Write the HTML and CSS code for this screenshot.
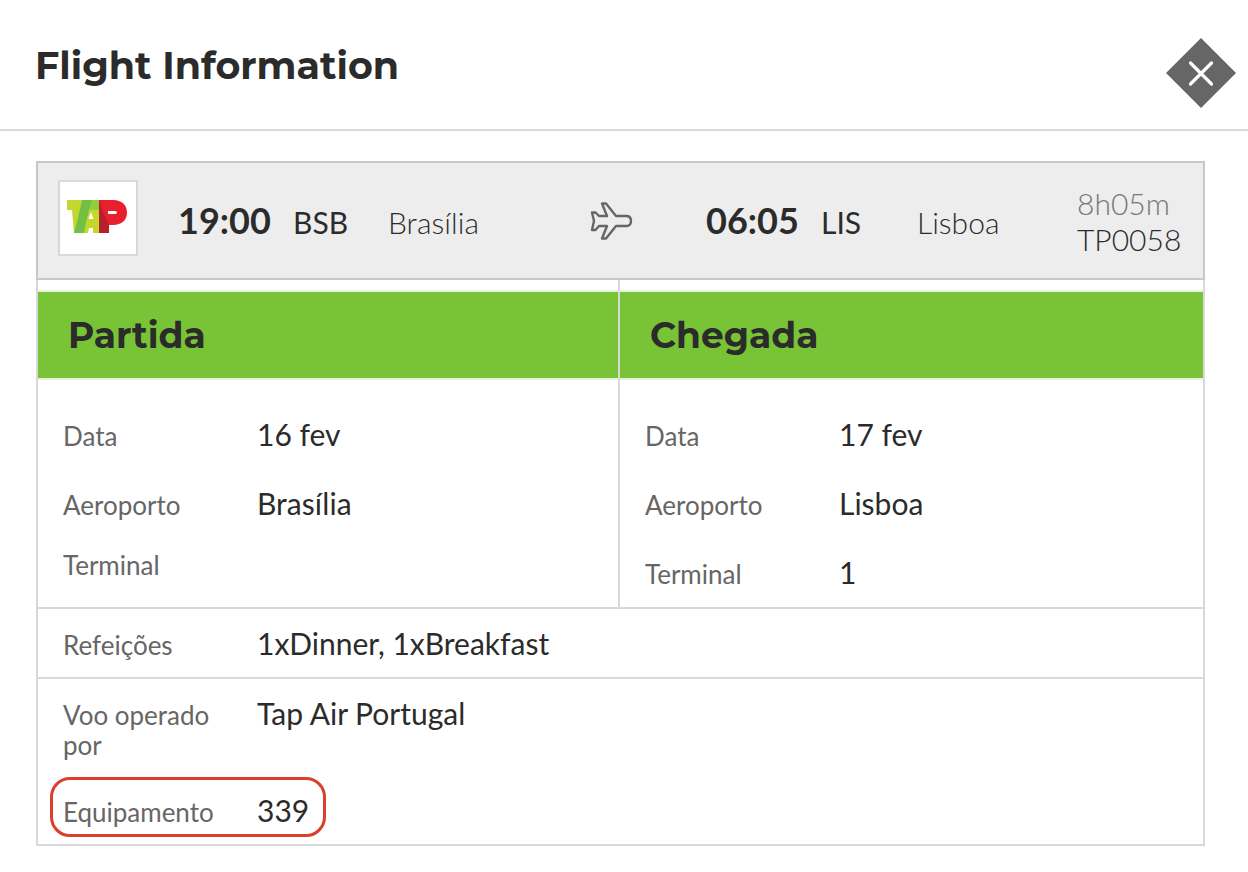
FILE: index.html
```html
<!DOCTYPE html>
<html lang="pt">
<head>
    <meta charset="UTF-8">
    <meta name="viewport" content="width=device-width, initial-scale=1.0">
    <title>Flight Information</title>
    <link rel="stylesheet" href="styles.css">
</head>
<body>
    <header class="modal-header">
        <h1>Flight Information</h1>
        <button type="button" class="close" aria-label="Fechar">
            <svg viewBox="0 0 70 70" width="70" height="70">
                <path d="M35 0L70 35L35 70L0 35Z" fill="#666"/>
                <path d="M24.500 25L45.500 46M45.500 25L24.500 46" stroke="#fff" stroke-width="3.200" stroke-linecap="round"/>
            </svg>
        </button>
    </header>

    <main class="flight">
        <section class="summary">
            <div class="logo">
                <svg viewBox="0 0 62 36" width="62" height="36" role="img" aria-label="TAP">
                    <path d="M0 2H33V35H26V30H22L21 35H7L5 12H0Z" fill="#c3d82e"/>
                    <path d="M15 2H25L19 24L17 35H7L11 20Z" fill="#72c043"/>
                    <path d="M23 10L25 2H33V12H23Z" fill="#8fce3c"/>
                    <path d="M21.500 21L24 14L26.500 21Z" fill="#fff"/>
                    <path d="M32 2H46C55 2 60 7 60 14.500C60 22 55 27 46 27H42V35H32Z" fill="#e8202e"/>
                    <path d="M32 2L36 14L42 27V35H32Z" fill="#b5202b"/>
                    <path d="M41 13H48Q50 13 50 14.500Q50 16 48 16H41Z" fill="#fff"/>
                </svg>
            </div>
            <span class="time">19:00</span>
            <span class="code">BSB</span>
            <span class="city">Brasília</span>
            <svg class="plane" viewBox="0 0 44 38" width="44" height="38">
                <path d="M12 1.500H16L26 14H37Q41 14.500 41 19Q41 23.500 37 24H26L16 36.500H12L17 24H9L5.500 28H2L4 19L2 10.500H5.500L9 14H17Z" fill="none" stroke="#666" stroke-width="2.400" stroke-linejoin="round"/>
            </svg>
            <span class="time">06:05</span>
            <span class="code">LIS</span>
            <span class="city">Lisboa</span>
            <div class="info">
                <div class="duration">8h05m</div>
                <div>TP0058</div>
            </div>
        </section>

        <div class="columns">
            <section class="column">
                <h2>Partida</h2>
                <dl class="details">
                    <div class="row"><dt>Data</dt><dd>16 fev</dd></div>
                    <div class="row"><dt>Aeroporto</dt><dd>Brasília</dd></div>
                    <div class="row"><dt>Terminal</dt><dd></dd></div>
                </dl>
            </section>
            <section class="column">
                <h2>Chegada</h2>
                <dl class="details">
                    <div class="row"><dt>Data</dt><dd>17 fev</dd></div>
                    <div class="row"><dt>Aeroporto</dt><dd>Lisboa</dd></div>
                    <div class="row"><dt>Terminal</dt><dd>1</dd></div>
                </dl>
            </section>
        </div>

        <dl class="extra">
            <div class="row"><dt>Refeições</dt><dd>1xDinner, 1xBreakfast</dd></div>
        </dl>
        <dl class="extra">
            <div class="row"><dt>Voo operado por</dt><dd>Tap Air Portugal</dd></div>
            <div class="row marked"><dt>Equipamento</dt><dd>339</dd></div>
        </dl>
    </main>
</body>
</html>
```
FILE: styles.css
```css
* {
    box-sizing: border-box;
}

body {
    margin: 0;
    background-color: #fff;
    color: #2b2b2b;
    font-family: Lato, sans-serif;
    font-size: 30px;
    line-height: 36px;
}

h1,
h2 {
    margin: 0;
    font-family: Montserrat, Inter, sans-serif;
    font-size: 38px;
    font-weight: 700;
    line-height: 46px;
}

.modal-header {
    display: flex;
    justify-content: space-between;
    align-items: flex-start;
    padding: 38px 12px 21px 35px;
    border-bottom: 2px solid #d9d9d9;
}

.modal-header h1 {
    padding-top: 5px;
}

.close {
    display: block;
    padding: 0;
    border: none;
    background: none;
    cursor: pointer;
}

.close svg {
    display: block;
}

.flight {
    margin: 30px 43px 26px 36px;
    border: 2px solid #d9d9d9;
    border-top: none;
}

/* flight summary */
.summary {
    display: grid;
    grid-template-columns: 120fr 115fr 95fr 202fr 116fr 115fr 96fr 160fr 106fr;
    align-items: center;
    margin: 0 -2px;
    padding: 17px 20px;
    border: 2px solid #c8c8c8;
    background-color: #ededed;
    white-space: nowrap;
}

.logo {
    display: flex;
    align-self: start;
    justify-content: center;
    width: 80px;
    height: 76px;
    margin-bottom: 5px;
    padding-top: 16px;
    border: 2px solid #d9d9d9;
    background-color: #fff;
}

.time {
    padding-bottom: 2px;
    font-size: 36px;
    font-weight: 700;
}

.code,
.city {
    padding-top: 2px;
}

.city,
.info {
    font-weight: 300;
}

.duration {
    color: #777;
}

/* departure and arrival */
.columns {
    display: grid;
    grid-template-columns: 580fr 585fr;
}

.column {
    padding-top: 10px;
}

.column + .column {
    border-left: 2px solid #d9d9d9;
}

.column h2 {
    padding: 20px 30px;
    border-top: 2px solid #e6f2dc;
    border-bottom: 2px solid #e6f2dc;
    background-color: #78c336;
    background-clip: padding-box;
    font-size: 36px;
}

.details {
    display: grid;
    gap: 25px;
    margin: 0;
    padding: 32px 25px 13px;
}

.row {
    display: grid;
    grid-template-columns: 160px 1fr;
    column-gap: 34px;
    align-items: baseline;
}

dt {
    color: #666;
    font-size: 26px;
    line-height: 30px;
}

dd {
    margin: 0;
    line-height: 44px;
}

.extra {
    display: grid;
    gap: 28px;
    margin: 0;
    padding: 12px 25px;
    border-top: 2px solid #d9d9d9;
}

/* red outline round the aircraft type */
.marked {
    position: relative;
}

.marked::after {
    content: "";
    position: absolute;
    top: -11px;
    left: -13px;
    box-sizing: border-box;
    width: 276px;
    height: 60px;
    border: 3px solid #dc3f2d;
    border-radius: 20px;
}
```
